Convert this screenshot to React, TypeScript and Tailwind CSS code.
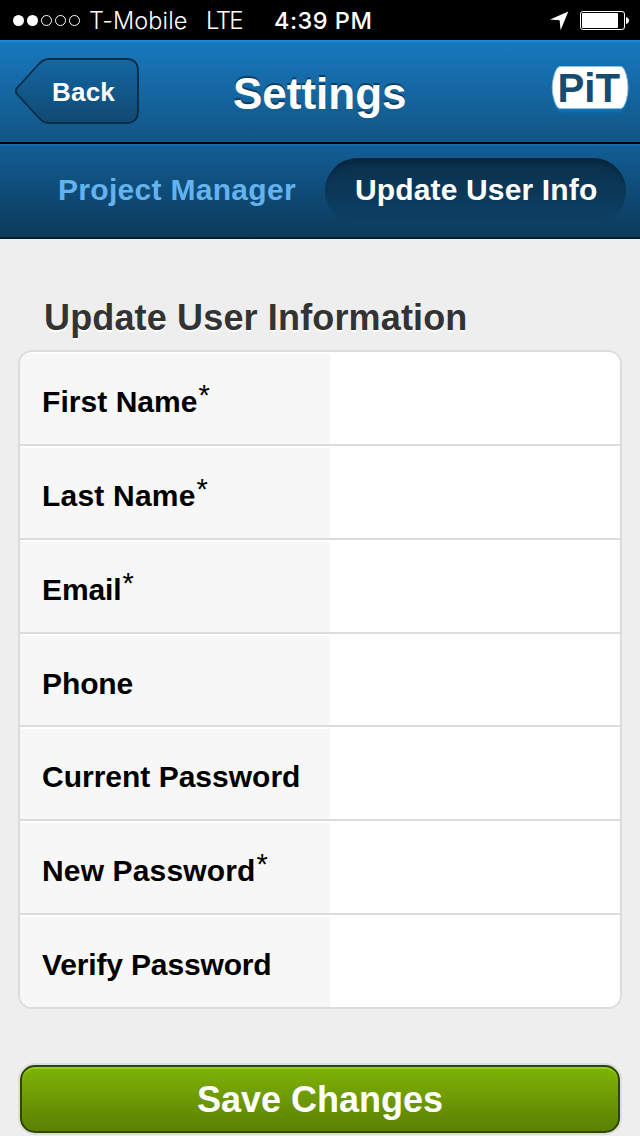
const fields = [
  { label: 'First Name', required: true, height: 'h-[94px]', spacing: 'tracking-[0.05px]' },
  { label: 'Last Name', required: true, height: 'h-[94px]', spacing: 'tracking-[0.2px]' },
  { label: 'Email', required: true, height: 'h-[94px]', spacing: 'tracking-[-0.1px]' },
  { label: 'Phone', required: false, height: 'h-[93px]', spacing: 'tracking-[-0.1px]' },
  { label: 'Current Password', required: false, height: 'h-[94px]', spacing: 'tracking-[0px]' },
  { label: 'New Password', required: true, height: 'h-[94px]', spacing: 'tracking-[0.15px]' },
  { label: 'Verify Password', required: false, height: 'h-[92px]', spacing: 'tracking-[-0.15px]' },
];

function StatusBar() {
  return (
    <div className="flex h-10 items-center bg-black font-['Inter',sans-serif] text-[24px] leading-10 whitespace-nowrap text-white">
      <svg className="ml-3 h-10 w-[70px] shrink-0" viewBox="0 0 70 40" fill="none" stroke="#fff">
        <circle cx="6.5" cy="20.5" r="5.5" fill="#fff" stroke="none" />
        <circle cx="20.5" cy="20.5" r="5.5" fill="#fff" stroke="none" />
        <circle cx="34.5" cy="20.5" r="5" />
        <circle cx="48.5" cy="20.5" r="5" />
        <circle cx="62.5" cy="20.5" r="5" />
      </svg>
      <span className="mt-[2px] ml-[7px] w-[117px] shrink-0 text-[23.5px] font-[350] tracking-[0.1px]">T-Mobile</span>
      <span className="mt-[2px] w-[68px] shrink-0 font-light tracking-[-1.6px]">LTE</span>
      <span className="mt-[2px] w-[110px] shrink-0 text-[23.5px] font-medium tracking-[0.5px]">4:39 PM</span>
      <svg className="ml-auto h-10 w-[90px] shrink-0" viewBox="550 0 90 40">
        <path d="M568.3 11.5 550 19.5 559.6 20.3 560.6 30.3Z" fill="#fff" />
        <rect x="580.5" y="11.5" width="44" height="18" rx="2.5" fill="none" stroke="#fff" />
        <rect x="582" y="13" width="36" height="15" rx="1" fill="#fff" />
        <path d="M626 17c4 1 4 6 0 7Z" fill="#fff" />
      </svg>
    </div>
  );
}

function Header() {
  return (
    <header className="flex h-[104px] border-b-2 border-black bg-linear-to-b from-[#1779c0] to-[#125584] shadow-[inset_0_2px_0_#1b87d5]">
      <button className="relative mt-[18px] ml-[14px] h-[66px] w-[126px] text-left">
        <svg className="absolute inset-0 h-full w-full" viewBox="0 0 126 66">
          <defs>
            <linearGradient id="back" x2="0" y2="1">
              <stop offset="0" stopColor="#1467a3" />
              <stop offset="1" stopColor="#104972" />
            </linearGradient>
          </defs>
          <path
            d="M35 1H112Q124 1 124 13V53Q124 65 112 65H35Q29 65 24 59L2.5 35.5Q1 33 2.5 30.5L24 7Q29 1 35 1Z"
            fill="url(#back)"
            stroke="#092c45"
            strokeWidth="1.8"
          />
          <path d="M36 2.5H113" stroke="#1670b2" strokeWidth="1" />
        </svg>
        <span className="relative top-px ml-[38px] text-[26px] leading-[66px] font-bold tracking-[0.2px]">Back</span>
      </button>
      <h1 className="mt-[24px] ml-[93px] w-[180px] text-[44px] leading-[60px] font-bold tracking-[0px] [text-shadow:0_-2px_0_#0d3e61]">
        Settings
      </h1>
      <svg className="mt-[19px] ml-auto h-[64px] w-[94px]" viewBox="546 59 94 64">
        <defs>
          <filter id="glow" x="-20%" y="-20%" width="140%" height="150%">
            <feGaussianBlur stdDeviation="2" />
          </filter>
        </defs>
        <path d="M558 67H622Q629 88 622 112H558Q548 91 558 67Z" fill="#0f73b8" filter="url(#glow)" />
        <path d="M560 66.5H621Q623.5 66.5 626 74Q630 88 626 101Q623.5 108.5 621 108.5H560Q557 108.5 554.5 101Q550 88 554.5 74Q557 66.5 560 66.5Z" fill="#fff" stroke="#8fc1e2" />
        <text x="557.5" y="102" fill="#164b72" textLength="62.5" lengthAdjust="spacingAndGlyphs" className="font-['Liberation_Sans',sans-serif] text-[41px] font-bold">
          PiT
        </text>
      </svg>
    </header>
  );
}

function Tabs() {
  return (
    <nav className="flex h-[95px] border-b-2 border-[#071f30] bg-linear-to-b from-[#125e97] to-[#0c3a5a] pt-[14px] text-[30px] leading-[64px] font-bold whitespace-nowrap shadow-[inset_0_2px_0_#1468a5]">
      <a className="ml-[58px] w-[267px] tracking-[0.3px] text-[#63b3ef]">Project Manager</a>
      <a className="h-[66px] w-[301px] rounded-full bg-linear-to-b from-[#0a2f4a] to-[#0d4166] pl-[30px] tracking-[0.15px] text-white shadow-[inset_0_7px_5px_-4px_#05233b]">
        Update User Info
      </a>
    </nav>
  );
}

export default function App() {
  return (
    <div className="flex h-[1136px] w-[640px] flex-col overflow-hidden bg-[#eee] font-['Liberation_Sans',Arial,sans-serif] text-white">
      <StatusBar />
      <Header />
      <Tabs />
      <main className="flex flex-col px-[18px]">
        <h2 className="mt-[59px] h-[52px] pl-[26px] text-[36px] leading-[40px] font-bold tracking-[0.15px] text-[#333] [text-shadow:0_2px_0_#fff]">
          Update User Information
        </h2>
        <form className="flex flex-col">
          <div className="overflow-hidden rounded-[14px] border-2 border-[#dcdcdc] bg-white">
            {fields.map((field) => (
              <div key={field.label} className={`flex border-b-2 border-[#dcdcdc] last:border-b-0 ${field.height}`}>
                <label className="mt-[2px] flex w-[310px] bg-[#f7f7f7] pl-[22px] text-[30px] font-bold text-black">
                  <span className={`mt-[28px] leading-[40px] whitespace-nowrap ${field.spacing}`}>{field.label}</span>
                  {field.required && <span className="mt-[21px] ml-px text-[29px] leading-[40px] font-normal">*</span>}
                </label>
                <input className="min-w-0 flex-1 bg-white px-4 text-[30px] text-black outline-none" aria-label={field.label} />
              </div>
            ))}
          </div>
          <button
            type="button"
            className="mx-[2px] mt-[56px] h-[68px] rounded-[15px] border-2 border-[#2c4604] bg-linear-to-b from-[#7fb307] to-[#5b8003] pt-[2px] text-[36px] leading-[62px] font-bold shadow-[0_0_0_2px_#ddd,inset_0_2px_0_#93ce0a]"
          >
            Save Changes
          </button>
        </form>
      </main>
    </div>
  );
}
